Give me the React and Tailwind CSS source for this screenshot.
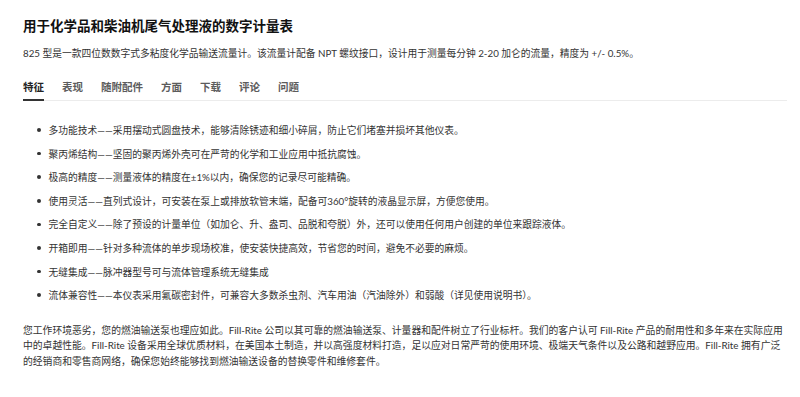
import React from "react";

const tabs = ["特征", "表现", "随附配件", "方面", "下载", "评论", "问题"];

const features = [
  "多功能技术——采用摆动式圆盘技术，能够清除锈迹和细小碎屑，防止它们堵塞并损坏其他仪表。",
  "聚丙烯结构——坚固的聚丙烯外壳可在严苛的化学和工业应用中抵抗腐蚀。",
  "极高的精度——测量液体的精度在±1%以内，确保您的记录尽可能精确。",
  "使用灵活——直列式设计，可安装在泵上或排放软管末端，配备可360°旋转的液晶显示屏，方便您使用。",
  "完全自定义——除了预设的计量单位（如加仑、升、盎司、品脱和夸脱）外，还可以使用任何用户创建的单位来跟踪液体。",
  "开箱即用——针对多种流体的单步现场校准，使安装快捷高效，节省您的时间，避免不必要的麻烦。",
  "无缝集成——脉冲器型号可与流体管理系统无缝集成",
  "流体兼容性——本仪表采用氟碳密封件，可兼容大多数杀虫剂、汽车用油（汽油除外）和弱酸（详见使用说明书）。",
];

export default function App() {
  return (
    <div className="w-[800px] h-[397px] overflow-hidden bg-white font-['Lato','Noto_Sans_CJK_SC',sans-serif] text-[#333]">
      <div className="pl-[23px] pr-[13px] pt-[16px]">
        <h1 className="text-[13.5px] leading-[20px] font-bold text-[#111]">
          用于化学品和柴油机尾气处理液的数字计量表
        </h1>
        <p className="mt-[8.5px] text-[9.75px] leading-[16px]">
          825 型是一款四位数数字式多粘度化学品输送流量计。该流量计配备 NPT 螺纹接口，设计用于测量每分钟 2-20 加仑的流量，精度为 +/- 0.5%。
        </p>

        <nav className="mt-[18px] flex gap-[18px] border-b border-[#ececec]">
          {tabs.map((t, i) => (
            <span
              key={t}
              className={
                i === 0
                  ? "-mb-px border-b-2 border-[#333] pb-[3px] text-[10.5px] leading-[16px] font-bold text-[#222]"
                  : "pb-[5px] text-[10.5px] leading-[16px] font-semibold text-[#5c5c5c]"
              }
            >
              {t}
            </span>
          ))}
        </nav>

        <ul className="mt-[21.5px] flex flex-col gap-[7.6px]">
          {features.map((f) => (
            <li key={f} className="flex items-center text-[9.75px] leading-[16px]">
              <span className="ml-[14px] mr-[8px] h-[3.5px] w-[3.5px] shrink-0 rounded-full bg-[#333]" />
              <span>{f}</span>
            </li>
          ))}
        </ul>

        <p className="mt-[19.5px] text-[9.8px] leading-[15.6px]">
          您工作环境恶劣，您的燃油输送泵也理应如此。Fill-Rite 公司以其可靠的燃油输送泵、计量器和配件树立了行业标杆。我们的客户认可 Fill-Rite 产品的耐用性和多年来在实际应用中的卓越性能。Fill-Rite 设备采用全球优质材料，在美国本土制造，并以高强度材料打造，足以应对日常严苛的使用环境、极端天气条件以及公路和越野应用。Fill-Rite 拥有广泛的经销商和零售商网络，确保您始终能够找到燃油输送设备的替换零件和维修套件。
        </p>
      </div>
    </div>
  );
}
